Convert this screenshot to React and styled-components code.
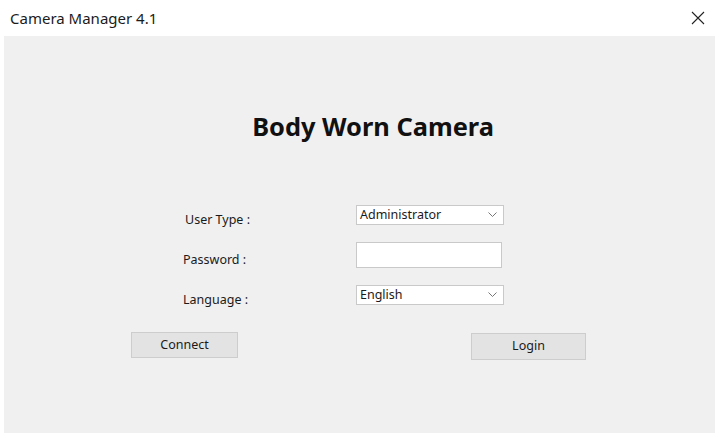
import React from 'react'
import styled, { createGlobalStyle } from 'styled-components'

const Global = createGlobalStyle`
    html, body {
        margin: 0;
        padding: 0;
        background: #ffffff;
    }
    * { box-sizing: border-box; }
`

const Window = styled.div`
    display: flex;
    flex-direction: column;
    width: 719px;
    height: 443px;
    background: #ffffff;
    font-family: "Noto Sans", "Open Sans", sans-serif;
    color: #1a1a1a;
`
const TitleBar = styled.div`
    display: flex;
    align-items: center;
    justify-content: space-between;
    height: 36px;
    padding: 0 14px 0 10px;
    font-size: 15px;
    color: #1b1b1b;
`
const Close = styled.svg`
    width: 14px;
    height: 14px;
`
const Client = styled.div`
    flex: 1;
    display: flex;
    flex-direction: column;
    margin: 0 4px 10px 4px;
    background: #f0f0f0;
    padding-top: 75px;
`
const Heading = styled.h1`
    margin: 0;
    text-align: center;
    font-size: 25.4px;
    line-height: 30px;
    font-weight: 700;
    color: #111;
    padding-left: 27px;
`
const Form = styled.div`
    display: grid;
    grid-template-columns: 173px 148px;
    grid-auto-rows: 40px;
    align-items: center;
    margin-top: 54px;
    padding-left: 179px;
`
const Label = styled.div`
    font-size: 12.5px;
    padding-top: 9px;
    padding-left: ${p => p.indent || 0}px;
`
const Field = styled.div`
    position: relative;
    display: flex;
    align-items: center;
    width: ${p => p.w || 148}px;
    height: ${p => p.h || 20}px;
    background: #ffffff;
    border: 1px solid #c9c9c9;
    padding: 0 0 2px 3px;
    font-size: 12.5px;
`
const Chevron = styled.svg`
    position: absolute;
    right: 6px;
    top: 6px;
    width: 9px;
    height: 6px;
`
const Buttons = styled.div`
    display: flex;
    align-items: flex-start;
    gap: 233px;
    margin-top: 17px;
    padding-left: 127px;
`
const Button = styled.div`
    display: flex;
    align-items: center;
    justify-content: center;
    width: ${p => p.w}px;
    height: ${p => p.h}px;
    margin-top: ${p => p.top || 0}px;
    background: #e3e3e3;
    border: 1px solid #cdcdcd;
    font-size: 12.5px;
    padding-bottom: 2px;
`

const Select = ({ value }) => (
    <Field>
        {value}
        <Chevron viewBox="0 0 9 6">
            <polyline points="0.5,0.5 4.5,4.5 8.5,0.5" fill="none" stroke="#777" strokeWidth="1" />
        </Chevron>
    </Field>
)

const App = () => {
    return (
        <>
            <Global />
            <Window>
                <TitleBar>
                    <span>Camera Manager 4.1</span>
                    <Close viewBox="0 0 14 14">
                        <path d="M1 1 L13 13 M13 1 L1 13" stroke="#222" strokeWidth="1.1" fill="none" />
                    </Close>
                </TitleBar>
                <Client>
                    <Heading>Body Worn Camera</Heading>
                    <Form>
                        <Label indent={2}>User Type :</Label>
                        <Select value="Administrator" />
                        <Label>Password :</Label>
                        <Field w={146} h={26} />
                        <Label>Language :</Label>
                        <Select value="English" />
                    </Form>
                    <Buttons>
                        <Button w={107} h={26}>Connect</Button>
                        <Button w={115} h={27} top={1}>Login</Button>
                    </Buttons>
                </Client>
            </Window>
        </>
    )
}

export default App
